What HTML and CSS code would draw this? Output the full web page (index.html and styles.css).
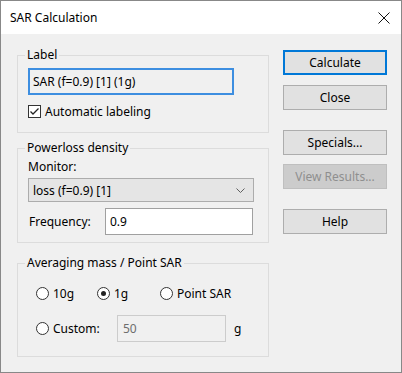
FILE: index.html
```html
<!DOCTYPE html>
<html>
<head>
<meta charset="utf-8">
<link rel="stylesheet" href="styles.css">
</head>
<body>
<div class="window">
  <div class="titlebar">
    <span class="title">SAR Calculation</span>
    <svg class="close" width="12" height="12" viewBox="0 0 12 12"><path d="M0.5 0.5 L11.5 11.5 M11.5 0.5 L0.5 11.5" stroke="#111" stroke-width="1" fill="none"/></svg>
  </div>
  <div class="content">
    <div class="left">
      <fieldset class="group g1">
        <legend>Label</legend>
        <div class="edit focused">SAR (f=0.9) [1] (1g)</div>
        <div class="check-row">
          <span class="checkbox"><svg width="11" height="11" viewBox="0 0 11 11"><path d="M1.5 5.5 L4 8 L9.5 2.5" stroke="#222" stroke-width="1.3" fill="none"/></svg></span>
          <span>Automatic labeling</span>
        </div>
      </fieldset>
      <fieldset class="group g2">
        <legend>Powerloss density</legend>
        <div class="monitor-label">Monitor:</div>
        <div class="combo">
          <span>loss (f=0.9) [1]</span>
          <svg width="9" height="5" viewBox="0 0 9 5"><path d="M0.5 0.5 L4.5 4.5 L8.5 0.5" stroke="#606060" stroke-width="1" fill="none"/></svg>
        </div>
        <div class="freq-row">
          <span class="freq-label">Frequency:</span>
          <div class="edit freq">0.9</div>
        </div>
      </fieldset>
      <fieldset class="group g3">
        <legend>Averaging mass / Point SAR</legend>
        <div class="radio-row">
          <div class="opt o10"><span class="radio"></span><span>10g</span></div>
          <div class="opt o1"><span class="radio checked"></span><span>1g</span></div>
          <div class="opt"><span class="radio"></span><span>Point SAR</span></div>
        </div>
        <div class="custom-row">
          <div class="opt ocustom"><span class="radio"></span><span>Custom:</span></div>
          <div class="edit disabled">50</div>
          <span class="unit">g</span>
        </div>
      </fieldset>
    </div>
    <div class="right">
      <div class="btn default b-calc">Calculate</div>
      <div class="btn b-close">Close</div>
      <div class="btn b-spec">Specials...</div>
      <div class="btn disabled b-view">View Results...</div>
      <div class="btn b-help">Help</div>
    </div>
  </div>
</div>
</body>
</html>
```

FILE: styles.css
```css
* { box-sizing: border-box; }
html, body { margin: 0; padding: 0; }
body {
  font-family: "Noto Sans", "Segoe UI", sans-serif;
  font-size: 12px;
  color: #000;
  background: #f0f0f0;
}
.window {
  width: 402px;
  height: 373px;
  border: 1px solid #888;
  background: #f0f0f0;
  display: flex;
  flex-direction: column;
}
.titlebar {
  flex: none;
  height: 33px;
  background: #fff;
  display: flex;
  align-items: center;
  justify-content: space-between;
  padding: 0 11px 0 9px;
}
.title { font-size: 12px; }
.close { display: block; }
.content {
  flex: 1;
  display: flex;
  align-items: flex-start;
  padding: 13px 0 0 16px;
}
.left { width: 252px; display: flex; flex-direction: column; }
.group {
  margin: 0;
  min-width: 0;
  width: 252px;
  border: 1px solid #dcdcdc;
  padding: 5px 14px 14px 10px;
}
.group legend {
  padding: 0 2px;
  margin-left: -3px;
  line-height: 16px;
}
.g2 { margin-top: 7px; padding-top: 3px; padding-bottom: 7px; }
.g3 { margin-top: 12px; padding-top: 16px; padding-bottom: 14px; }

.edit {
  height: 27px;
  border: 1px solid #a0a0a0;
  background: #fff;
  display: flex;
  align-items: center;
  padding-left: 4px;
}
.edit.focused {
  width: 206px;
  border: 2px solid #3d8ee0;
  background: #f0f0f0;
  padding-left: 3px;
}
.check-row {
  margin-top: 10px;
  height: 13px;
  display: flex;
  align-items: center;
  gap: 4px;
}
.checkbox {
  width: 13px;
  height: 13px;
  border: 1px solid #333;
  background: #fff;
  display: flex;
  align-items: center;
  justify-content: center;
}
.checkbox svg { display: block; }
.monitor-label { line-height: 16px; }
.combo {
  margin-top: 3px;
  width: 226px;
  height: 24px;
  background: #e5e5e5;
  border: 1px solid #acacac;
  display: flex;
  align-items: center;
  justify-content: space-between;
  padding: 0 8px 0 4px;
}
.combo svg { display: block; }
.freq-row {
  margin-top: 6px;
  display: flex;
  align-items: center;
}
.freq-label { width: 77px; padding-left: 1px; }
.edit.freq { width: 148px; }

.radio-row {
  height: 13px;
  display: grid;
  grid-template-columns: 61px 63px auto;
  padding-left: 8px;
}
.opt { display: flex; align-items: center; gap: 4px; height: 13px; }
.radio {
  width: 13px;
  height: 13px;
  border-radius: 50%;
  border: 1px solid #333;
  background: #fff;
  display: flex;
  align-items: center;
  justify-content: center;
  flex: none;
}
.radio.checked::after {
  content: "";
  width: 5px;
  height: 5px;
  border-radius: 50%;
  background: #222;
}
.custom-row {
  margin-top: 15px;
  display: flex;
  align-items: center;
  padding-left: 8px;
}
.ocustom { width: 81px; }
.edit.disabled {
  width: 109px;
  background: #f0f0f0;
  border-color: #cccccc;
  color: #6d6d6d;
  padding-left: 5px;
}
.unit { margin-left: 8px; }

.right {
  margin-left: 14px;
  display: flex;
  flex-direction: column;
}
.btn {
  width: 104px;
  height: 25px;
  background: #e1e1e1;
  border: 1px solid #adadad;
  display: flex;
  align-items: center;
  justify-content: center;
}
.btn.default { border: 2px solid #0078d7; }
.btn.disabled { background: #cccccc; border-color: #bfbfbf; color: #8f8f8f; }
.b-calc { margin-top: 3px; }
.b-close { margin-top: 10px; }
.b-spec { margin-top: 20px; }
.b-view { margin-top: 9px; }
.b-help { margin-top: 20px; }
```
